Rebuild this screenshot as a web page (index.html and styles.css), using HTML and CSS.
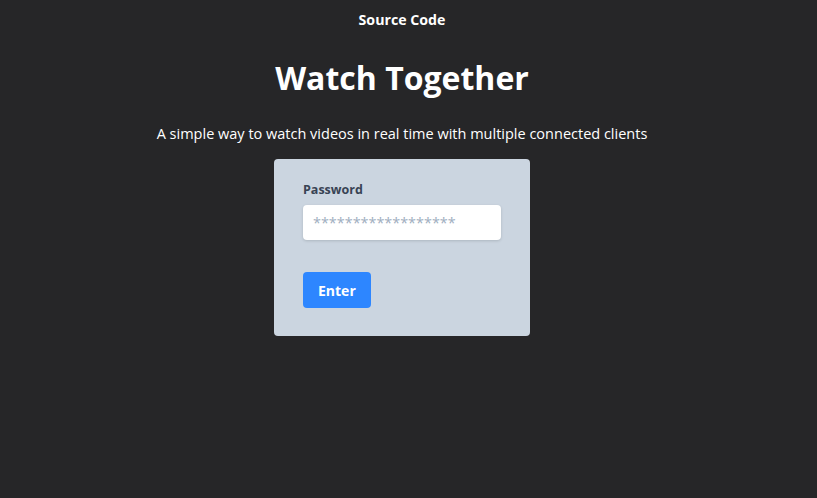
FILE: index.html
```html
<!DOCTYPE html>
<html>
<head>
<meta charset="utf-8">
<link rel="stylesheet" href="styles.css">
</head>
<body>
<header class="top">
  <a class="source" href="#">Source Code</a>
</header>
<main class="main">
  <h1 class="title">Watch Together</h1>
  <p class="subtitle">A simple way to watch videos in real time with multiple connected clients</p>
  <form class="card">
    <label class="label" for="pw">Password</label>
    <input class="input" id="pw" type="password" placeholder="******************">
    <button class="btn" type="button">Enter</button>
  </form>
</main>
</body>
</html>
```
FILE: styles.css
```css
* { box-sizing: border-box; }
html, body { margin: 0; padding: 0; }
html { background: #262628; }
body {
  background: #262628;
  color: #ffffff;
  font-family: "Open Sans", sans-serif;
  width: 804px;
  height: 498px;
  overflow: hidden;
}
.top {
  display: flex;
  justify-content: center;
  padding-top: 10px;
  height: 38px;
}
.source {
  color: #ffffff;
  font-weight: 700;
  font-size: 14.2px;
  line-height: 20px;
  text-decoration: none;
}
.main {
  display: flex;
  flex-direction: column;
  align-items: center;
}
.title {
  margin: 16px 0 0;
  font-size: 32px;
  line-height: 48px;
  font-weight: 700;
}
.subtitle {
  margin: 22px 0 0;
  font-size: 14.5px;
  line-height: 20px;
}
.card {
  margin-top: 15px;
  width: 256px;
  background: #cbd5e0;
  border-radius: 4px;
  padding: 22px 29px 28px;
  display: flex;
  flex-direction: column;
  align-items: flex-start;
}
.label {
  color: #384354;
  font-size: 12.5px;
  font-weight: 700;
  line-height: 18px;
  margin-bottom: 6px;
}
.input {
  width: 198px;
  height: 35px;
  border: none;
  border-radius: 4px;
  background: #ffffff;
  box-shadow: 0 1px 3px rgba(0,0,0,0.15);
  padding: 0 10px;
  font-family: "Open Sans", sans-serif;
  font-size: 14.4px;
  color: #4a5568;
  outline: none;
}
.input::placeholder { color: #a0aec0; }
.btn {
  margin-top: 32px;
  background: #2d86ff;
  color: #ffffff;
  border: none;
  border-radius: 4px;
  height: 36px;
  padding: 0 15px;
  font-family: "Open Sans", sans-serif;
  font-weight: 700;
  font-size: 14px;
}
```
